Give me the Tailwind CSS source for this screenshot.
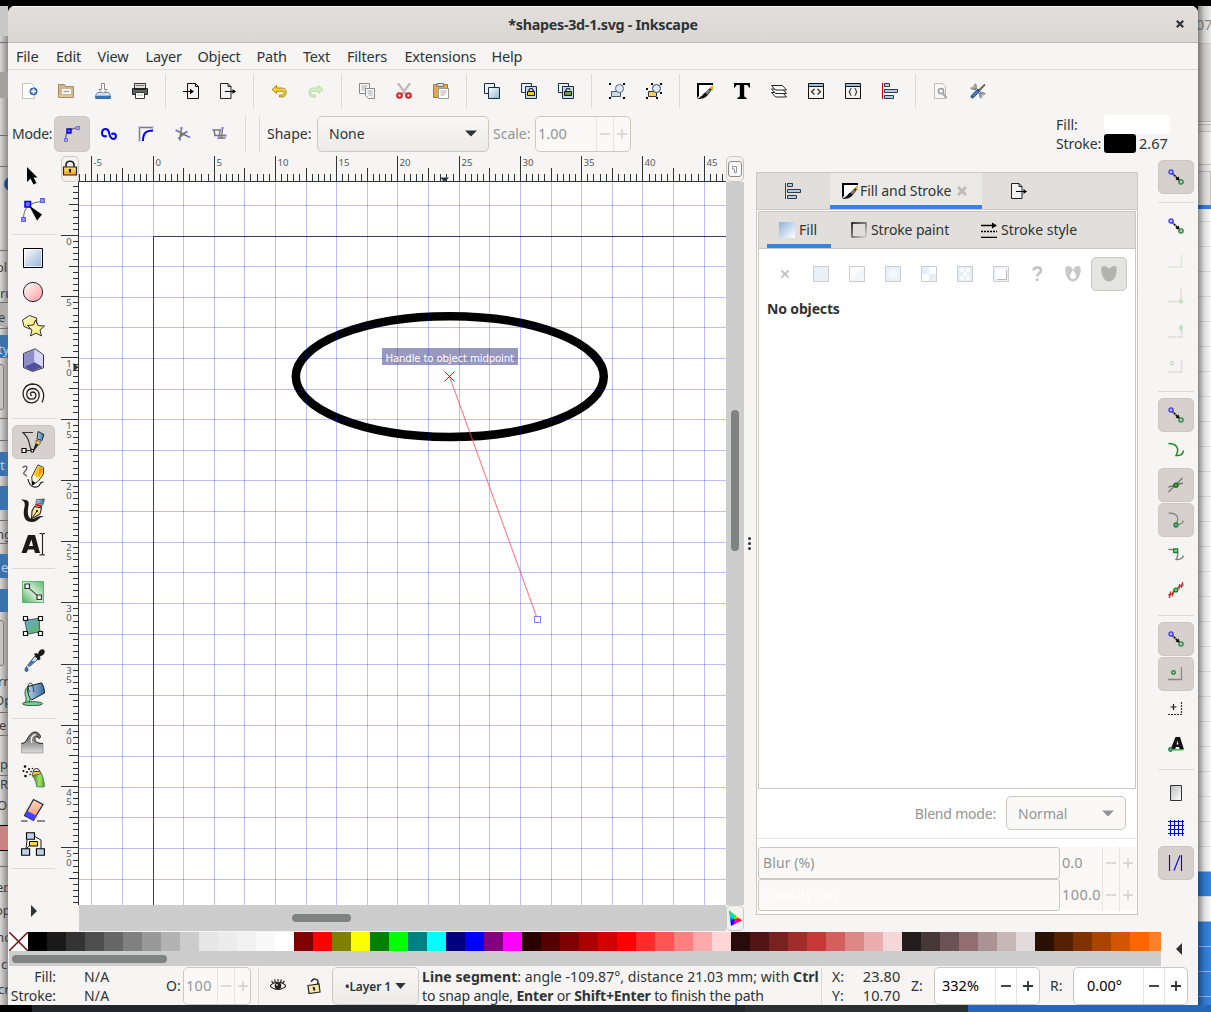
<!DOCTYPE html>
<html lang="en">
<head>
<meta charset="utf-8">
<title>*shapes-3d-1.svg - Inkscape</title>
<script src="https://cdn.jsdelivr.net/npm/@tailwindcss/browser@4"></script>
</head>
<body class="w-[1211px] h-[1012px] overflow-hidden bg-black font-['Noto_Sans',sans-serif] text-[14px] leading-[19px] text-[#2e3436]">

<svg width="0" height="0" class="absolute">
<defs>
<linearGradient id="gBlue" x1="0" y1="0" x2="1" y2="1"><stop offset="0" stop-color="#fff"/><stop offset="1" stop-color="#8fb3d6"/></linearGradient>
<linearGradient id="gBlueR" x1="0" y1="0" x2="1" y2="1"><stop offset="0" stop-color="#8fb3d9"/><stop offset="1" stop-color="#fff"/></linearGradient>
<linearGradient id="gPink" x1="0" y1="0" x2="1" y2="1"><stop offset="0" stop-color="#fff"/><stop offset="1" stop-color="#ff9aa0"/></linearGradient>
<linearGradient id="gYel" x1="0" y1="0" x2="1" y2="1"><stop offset="0" stop-color="#fffbe0"/><stop offset="1" stop-color="#fce94f"/></linearGradient>
<linearGradient id="gOr" x1="0" y1="0" x2="0" y2="1"><stop offset="0" stop-color="#ffe680"/><stop offset="1" stop-color="#f0a010"/></linearGradient>
<linearGradient id="gGreen" x1="0" y1="1" x2="1" y2="0"><stop offset="0" stop-color="#4fae5f"/><stop offset=".5" stop-color="#d7f0da"/><stop offset="1" stop-color="#5cb86a"/></linearGradient>
<linearGradient id="gGrn2" x1="0" y1="0" x2="1" y2="1"><stop offset="0" stop-color="#6aa5d8"/><stop offset="1" stop-color="#5fba5a"/></linearGradient>
<linearGradient id="gGray" x1="0" y1="0" x2="0" y2="1"><stop offset="0" stop-color="#666"/><stop offset=".4" stop-color="#888"/><stop offset="1" stop-color="#ddd"/></linearGradient>
<linearGradient id="gPage" x1="0" y1="0" x2="1" y2="1"><stop offset="0" stop-color="#bbb"/><stop offset="1" stop-color="#fff"/></linearGradient>
<linearGradient id="gFrame" x1="0" y1="0" x2="1" y2="1"><stop offset="0" stop-color="#000"/><stop offset="1" stop-color="#ccc"/></linearGradient>
<linearGradient id="gPaint" x1="0" y1="0" x2="1" y2="0"><stop offset="0" stop-color="#b4d2e8"/><stop offset="1" stop-color="#356a9c"/></linearGradient>
<linearGradient id="gEr" x1="0" y1="0" x2="0" y2="1"><stop offset="0" stop-color="#fbd9c8"/><stop offset="1" stop-color="#ee8c60"/></linearGradient>
<linearGradient id="gSpray" x1="0" y1="0" x2="1" y2="0"><stop offset="0" stop-color="#3f8f12"/><stop offset=".6" stop-color="#a8e070"/><stop offset="1" stop-color="#4fa018"/></linearGradient>
</defs>

<symbol id="new" viewBox="0 0 16 16"><path d="M.5.5h9l3 3v12H.5z" fill="#fff" stroke="#c2c2c2"/><circle cx="11.500" cy="8.300" r="3.900" fill="#3465a4"/><path d="M11.500 5.800v5M9 8.300h5" stroke="#fff" stroke-width="1.700"/></symbol>
<symbol id="open" viewBox="0 0 16 16"><path d="M.5 14.500V1.500h6l1 2h8v11z" fill="#d0b690" stroke="#a98b60"/><path d="M4.500 6.500h8v4h-8z" fill="#f4f1ea" stroke="#fff"/><path d="M5.500 8.500h6" stroke="#999"/><path d="M1 12h14v2H1z" fill="#dcc49f"/></symbol>
<symbol id="save" viewBox="0 0 16 16"><path d="M2.500 9.500h11l2 3v3H.5v-3z" fill="#d7e3f0" stroke="#6d8fb5"/><path d="M1 13h14v2.500H1z" fill="#3b7bc2" stroke="#204a87" stroke-width=".5"/><path d="M6.500.5h3v6h2.500L8 10.500 4 6.500h2.500z" fill="#fff" stroke="#8a8a8a"/></symbol>
<symbol id="print" viewBox="0 0 16 16"><path d="M2.500.5h11v5h-11z" fill="#ddd" stroke="#333"/><path d="M4 2.500h8" stroke="#777"/><path d="M.5 5.500h15v6H.5z" fill="#666" stroke="#222"/><path d="M2 5h12v2H2z" fill="#222"/><path d="M3.500 9.500h9v6h-9z" fill="#fff" stroke="#333"/><path d="M5 11h6v2H5z" fill="#c8e8c8"/></symbol>
<symbol id="import" viewBox="0 0 16 16"><path d="M4.500.5h8l3 3v12h-11z" fill="#f2f2f2" stroke="#111"/><path d="M12.500.5v3h3" fill="none" stroke="#111"/><path d="M0 8.500h8" stroke="#000" stroke-width="1.200"/><path d="M7 5.800l4 2.700-4 2.700z"/></symbol>
<symbol id="export" viewBox="0 0 16 16"><path d="M.5.5h7.500l3 3v12H.5z" fill="#f2f2f2" stroke="#222"/><path d="M8 .5v3h3" fill="none" stroke="#222"/><path d="M5 8.500h8" stroke="#000" stroke-width="1.200"/><path d="M12.500 6l3.500 2.500-3.500 2.500z"/></symbol>
<symbol id="undo" viewBox="0 0 16 16"><path d="M5.500 2.500L1 6.500l4.500 4V8.300h5.500c2.500 0 2.500 3.700 0 3.700H8.500v2H11c5.500 0 5.500-9 0-9H5.500z" fill="#f0d040" stroke="#b58900"/></symbol>
<symbol id="redo" viewBox="0 0 16 16"><path d="M10.500 2.500L15 6.500l-4.500 4V8.300H5c-2.500 0-2.500 3.700 0 3.700h2.500v2H5c-5.500 0-5.500-9 0-9h5.500z" fill="#d6ecc8" stroke="#b7dba4"/></symbol>
<symbol id="copy" viewBox="0 0 16 16"><path d="M.5.5h10v10H.5z" fill="#f8f8f8" stroke="#888"/><path d="M2.500 3h6M2.500 5h5M2.500 7h3" stroke="#aaa"/><path d="M6.500 5.500h9v10h-6l-3-3z" fill="#f8f8f8" stroke="#888"/><path d="M8.500 8h5M8.500 10h5M9.500 12h4" stroke="#aaa"/></symbol>
<symbol id="cut" viewBox="0 0 16 16"><path d="M2 .5l8.500 11M14 .5L5.500 11.500" stroke="#999" stroke-width="2"/><path d="M2.300 1l7.500 9.500M13.700 1L6 10.500" stroke="#eee" stroke-width=".7"/><circle cx="3.500" cy="12.500" r="2.300" fill="none" stroke="#d81e1e" stroke-width="2"/><circle cx="12.500" cy="12.500" r="2.300" fill="none" stroke="#d81e1e" stroke-width="2"/></symbol>
<symbol id="paste" viewBox="0 0 16 16"><path d="M.5 1.500h14v13H.5z" fill="#e2a850" stroke="#a8752a"/><path d="M4 .5h6.500v3H4z" fill="#ddd" stroke="#777"/><path d="M5.500 5.500h10v10h-10z" fill="#fff" stroke="#999"/><path d="M7.500 8h6M7.500 10h6M7.500 12h4" stroke="#aaa"/></symbol>
<symbol id="dup" viewBox="0 0 16 16"><path d="M.5.5h10v10H.5z" fill="#e8f0f8" stroke="#1c2c40"/><path d="M4.500 4.500h11v11h-11z" fill="url(#gBlue)" stroke="#1c2c40"/></symbol>
<symbol id="clone" viewBox="0 0 16 16"><path d="M.5.5h10v9H.5z" fill="#e8f0f8" stroke="#1c2c40"/><path d="M4.500 3.500h11v12h-11z" fill="#c7d9ec" stroke="#1c2c40"/><path d="M8 8.500V7c0-2 4-2 4 0v1.500" fill="none" stroke="#111" stroke-width="1.200"/><path d="M6.500 8.500h7v4h-7z" fill="#f5c432" stroke="#111"/></symbol>
<symbol id="unclone" viewBox="0 0 16 16"><path d="M.5.5h10v9H.5z" fill="#e8f0f8" stroke="#1c2c40"/><path d="M4.500 3.500h11v12h-11z" fill="#c7d9ec" stroke="#1c2c40"/><path d="M8 8.500V7c0-2 4-2 4 0" fill="none" stroke="#111" stroke-width="1.200"/><path d="M6.500 8.500h7v4h-7z" fill="#6a9f3a" stroke="#111"/></symbol>
<symbol id="group" viewBox="0 0 16 16"><path d="M0 0h2v2H0zM14 0h2v2h-2zM0 14h2v2H0zM14 14h2v2h-2z"/><path d="M2.500 8.500h9v5h-9z" fill="#c9d9ec" stroke="#456"/><circle cx="10.500" cy="5.500" r="4" fill="#dde8f4" stroke="#567"/></symbol>
<symbol id="ungroup" viewBox="0 0 16 16"><path d="M5 0h2v2H5zM14 0h2v2h-2zM0 5h2v2H0zM0 14h2v2H0zM14 9h2v2h-2zM10 14h2v2h-2z"/><path d="M2.500 8.500h8v5h-8z" fill="#f5cf50" stroke="#333"/><circle cx="10.500" cy="5.500" r="4" fill="#dde8f4" stroke="#345"/></symbol>
<symbol id="fs" viewBox="0 0 16 16"><path d="M.5.5h15L14 5l-5 5-8.500 5z" fill="#fff"/><path d="M0 0h16v2H2V13l-2 2z"/><path d="M15 3v3.500l-4 5.500-3.500 1 1-3.500z" fill="#333"/><path d="M16 2v6l-3-3z" fill="#f5b51a"/><path d="M9 9.500c-3 0-2 3-9 6.500 5 0 9-1 10.500-4z" fill="#111"/><path d="M11.500 6l2 2-3 3.500-2-1.500z" fill="#777"/></symbol>
<symbol id="text" viewBox="0 0 16 16"><path d="M0 0h16v4.500h-1.200C14.400 2.500 13.500 2 12 2h-1.800v10.500c0 1.500.8 2 2.300 2V16h-9v-1.500c1.500 0 2.300-.5 2.300-2V2H4C2.500 2 1.600 2.500 1.200 4.500H0z"/></symbol>
<symbol id="layers" viewBox="0 0 16 16"><g fill="#fff" stroke="#222"><path d="M.5 9.500h11l4 4.500h-11z"/><path d="M.5 6h11l4 4.500h-11z"/><path d="M.5 2.500h11l4 4.500h-11z"/></g></symbol>
<symbol id="xml" viewBox="0 0 16 16"><path d="M.5.5h15v15H.5z" fill="#f4f4f2" stroke="#111" stroke-width="1"/><path d="M1 1h14v2H1z" fill="#9fc0e2"/><path d="M1 3.500h14" stroke="#111"/><path d="M6.500 6L3.500 8.800l3 2.800M9.500 6l3 2.800-3 2.800" fill="none" stroke="#222" stroke-width="1.200"/></symbol>
<symbol id="css" viewBox="0 0 16 16"><path d="M.5.5h15v15H.5z" fill="#f4f4f2" stroke="#111" stroke-width="1"/><path d="M1 1h14v2H1z" fill="#9fc0e2"/><path d="M1 3.500h14" stroke="#111"/><path d="M6.500 5.500c-2.500 0-.5 3.300-2.700 3.300 2.200 0 .2 3.700 2.700 3.700M9.500 5.500c2.500 0 .5 3.300 2.700 3.300-2.200 0-.2 3.700-2.700 3.700" fill="none" stroke="#333" stroke-width="1.200"/></symbol>
<symbol id="align" viewBox="0 0 16 16"><path d="M.5 0v16" stroke="#d00000"/><g fill="#b5cbe2" stroke="#2b3a4a"><path d="M2.500.5h5v3h-5zM2.500 6.500h13v3h-13zM2.500 12.500h9v3h-9z"/></g></symbol>
<symbol id="docprops" viewBox="0 0 16 16"><path d="M1.500.5h8l3 3v12h-11z" fill="#f8f8f8" stroke="#bbb"/><circle cx="8" cy="8" r="2.600" fill="none" stroke="#999" stroke-width="1.500"/><path d="M9.500 10l4 5" stroke="#aaa" stroke-width="2.500"/></symbol>
<symbol id="prefs" viewBox="0 0 16 16"><path d="M3 3l10 10" stroke="#888" stroke-width="2.600"/><path d="M3 3l10 10" stroke="#ddd" stroke-width="1"/><path d="M1 4.500A2.700 2.700 0 1 0 4.500 1M15 11.500A2.700 2.700 0 1 0 11.500 15" fill="none" stroke="#888" stroke-width="1.500"/><path d="M15 1.500L8 8.500" stroke="#666" stroke-width="2"/><path d="M8 8L2.500 13.500" stroke="#204a87" stroke-width="3.600" stroke-linecap="round"/><path d="M8 8L2.500 13.500" stroke="#5b8fd0" stroke-width="1.500"/></symbol>

<symbol id="m1" viewBox="0 0 16 16"><path d="M1.500 14C1.500 6 5 2.500 14 2" fill="none" stroke="#777" stroke-width="1.500"/><g fill="#b0aef0" stroke="#6a68e8"><path d="M.5 12.500h3v3h-3zM12.500.5h3v3h-3z"/></g><path d="M3 3h4v4H3z" fill="#5a5af0" stroke="#0000e0" stroke-width="1.400"/></symbol>
<symbol id="m2" viewBox="0 0 16 16"><path d="M5.500 9.500c-1.500 1.800-4.500.5-4.500-2C1 2 7 1.500 8 6.500c.5 3 1 6.500 4.500 6.500 3 0 3.500-5.500 0-5.500-1 0-1.500.3-2 1" fill="none" stroke="#00f" stroke-width="2"/></symbol>
<symbol id="m3" viewBox="0 0 16 16"><path d="M15 1.500H1.500V15" fill="none" stroke="#777" stroke-width="1.400"/><path d="M5 15c0-8 3-10.500 10-10.500" fill="none" stroke="#00f" stroke-width="2"/><path d="M.5.5h2v2h-2zM13.500.5h2v2h-2zM.5 13.500h2v2h-2z" fill="#9c9af0"/></symbol>
<symbol id="m4" viewBox="0 0 16 16"><path d="M6.500 1.500L5 13.500M1.500 4.500L14 11M11.500 6L4.500 9.500M3 12.500l7-5" fill="none" stroke="#777" stroke-width="1.500"/><path d="M5.500 1h2v2h-2zM.5 3.500h2v2h-2zM13 10h2v2h-2zM4 12.500h2v2H4zM10.500 5h2v2h-2z" fill="#7d7bee"/></symbol>
<symbol id="m5" viewBox="0 0 16 16"><path d="M1.500 4h6.500l-1 8h6.500M10.500 2l-1 11M2 9.500h11.500M2 4l1 5.500" fill="none" stroke="#777" stroke-width="1.500"/><path d="M.5 3h2v2h-2zM7 3h2v2H7zM12.500 8.500h2v2h-2zM5.500 11h2v2h-2zM9.500 1h2v2h-2z" fill="#7d7bee"/></symbol>

<symbol id="t-sel" viewBox="0 0 24 24"><path d="M6 3v15l3.500-3.500 3 6 3-1.500-3-5.500h4z"/></symbol>
<symbol id="t-node" viewBox="0 0 24 24"><path d="M2.500 21C2.500 10 8 4 22 3.500" fill="none" stroke="#666"/><path d="M.7 19.700h3.600v3.600H.7zM19.700.7h3.600v3.600h-3.600z" fill="#a9a7f5" stroke="#5a58ee" stroke-width="1.200"/><path d="M4 3.500h5.500V9H4z" fill="#7472ff" stroke="#0000e8" stroke-width="1.500"/><path d="M8 7.500l13 9-5 6z"/></symbol>
<symbol id="t-rect" viewBox="0 0 24 24"><path d="M2.500 2.500h19v19h-19z" fill="url(#gBlue)" stroke="#000"/><path d="M3.500 3.500h17v17h-17z" fill="none" stroke="#fff" stroke-opacity=".7"/></symbol>
<symbol id="t-ell" viewBox="0 0 24 24"><circle cx="12" cy="12" r="9.600" fill="url(#gPink)" stroke="#222"/></symbol>
<symbol id="t-star" viewBox="0 0 24 24"><path d="M8.500 1.500L15.500 4 16 12l-7 3-6-2.500-1.500-6.500z" fill="url(#gYel)" stroke="#333"/><path d="M14.500 6l2.500 5.500 6.500.5-4.500 4 1.500 6-5.500-3-5.500 3 1.500-6L6.500 11.500l6-.5z" fill="url(#gYel)" stroke="#333"/></symbol>
<symbol id="t-box" viewBox="0 0 24 24"><path d="M2.500 5.500L14 .8l8.500 6v13L11.500 23.500l-9-4z" fill="#e0e0ff" stroke="#333"/><path d="M3 6L13.500 1.500V14L3 19z" fill="#8d8dc8"/><path d="M13.500 14l8.500 5-10.500 4L3 19z" fill="#4f4f9f"/><path d="M13.500 1.500V14l8.500 5V7z" fill="#d6d6fa"/></symbol>
<symbol id="t-spi" viewBox="0 0 24 24"><path d="M11 13.500c-1.800.3-2.500-3.500.7-3.500 5 .5 3.800 7.500-1.200 7.200C4 17 4 7 11.500 6.500c9 0 9 13.500-.5 14.300C-.5 21.500-1.500 2.500 11.500 2 20 2 25.500 11 21 20.500" fill="none" stroke="#222" stroke-width="1.300"/></symbol>
<symbol id="t-pen" viewBox="0 0 24 24"><path d="M3.500 20.500h8C6 17 12 12 2 2.500h10" fill="none" stroke="#333" stroke-width="1.200"/><path d="M1 18.500h4v4H1z" fill="#fff" stroke="#000" stroke-width="1.200"/><path d="M10 19.500h2.500V22H10z" fill="#fff" stroke="#000"/><path d="M17 1.500l6 3-2 6-5-1.500z" fill="url(#gPaint)" stroke="#234"/><path d="M15 10l5 2-2 3-3-1z" fill="#f7c63a" stroke="#333" stroke-width=".6"/><path d="M14.500 13.500l3 1.500-4.500 6-1-.5z" fill="#222"/></symbol>
<symbol id="t-pcl" viewBox="0 0 24 24"><path d="M1.500 3.500c5-3.500 6 0 1.500 5-2 2.500 3 1 2.500 4" fill="none" stroke="#555" stroke-width="1.200"/><path d="M7 15c2 11 11 9 12 5 .5-1.500 2-2 3.500-2" fill="none" stroke="#222" stroke-width="1.200"/><path d="M17 .8l5.500 2.700v6.500l-5 7-6 4-.8-8z" fill="#fff8d8" stroke="#333"/><path d="M17 1.500l5 2.500v6l-4.500 4-5-3z" fill="#ffc21a"/><path d="M18.500 3l3 2-4 8z" fill="#f58c00"/><path d="M10.800 16.500l3.500 2.300-3.300 3z"/></symbol>
<symbol id="t-cal" viewBox="0 0 24 24"><path d="M0 1.500c6 0 8.500 1 7.500 6-1 5.500-1.500 12 3 13.500 4 1 5-4.500 12.500-2.500-5 0-6 5.500-12 5.500C2 24 2 15 3.500 9 4.500 4.500 3 3 0 1.500z" fill="#1c1c1c"/><path d="M15.500 1.500l8-.5-1.500 5.500-7-1.500z" fill="url(#gPaint)" stroke="#234" stroke-width=".6"/><path d="M14.500 5.500l7 1.800-.8 2-7-2z" fill="#c81414"/><path d="M13.500 8.500l7 1.500-1.500 6-8.500 5 .5-8z" fill="#ffe89a" stroke="#222" stroke-width="1.100"/><path d="M16 13l-4.500 6.500" stroke="#222"/><circle cx="16" cy="13" r="1"/></symbol>
<symbol id="t-txt" viewBox="0 0 24 24"><path d="M7 3h7l5 18h-5l-1-3.500H7L5.500 21H.5zM10.500 7.500L8 14h4z" fill="#1a1a1a" fill-rule="evenodd"/><path d="M18.500 1.500h2l1 1 1-1h1.500M18.500 23h2l1-1 1 1h1.500M21.500 2v20" stroke="#222" fill="none" stroke-width="1.100"/></symbol>
<symbol id="t-grad" viewBox="0 0 24 24"><path d="M1.500 1.500h21v21h-21z" fill="url(#gGreen)" stroke="#5db56a"/><path d="M6 6.500l12 10.500" stroke="#555" stroke-width="1.200"/><path d="M4 4h4.500v4.500H4zM16 15h4.500v4.500H16z" fill="#e8f5e8" stroke="#333" stroke-width="1.200"/></symbol>
<symbol id="t-mesh" viewBox="0 0 24 24"><path d="M4.500 4.500c5 3 10-1 15 0-2 5-1 10 0 15-5-3-10 2-15 0 3-5-2-10 0-15z" fill="url(#gGrn2)" stroke="#456"/><path d="M2.500 2.500h4v4h-4zM17.500 2.500h4v4h-4zM2.500 17.500h4v4h-4zM17.500 17.500h4v4h-4z" fill="#fff" stroke="#111" stroke-width="1.200"/></symbol>
<symbol id="t-drop" viewBox="0 0 24 24"><path d="M14 8l3 3-8.500 7.500-2-1z" fill="#cfe0f2" stroke="#345"/><path d="M10.500 12.500l3 1-5.500 4.500-1-1z" fill="#3b73b0"/><path d="M13 6l2-1 2 1C18 0 25 0 23.500 5c-1 2.500-3.500 3-4.500 3.500l.5 2.500-2 1.500z" fill="#1a1a1a"/><path d="M5.500 18.500c3 4 1 5 0 5s-3-1 0-5z" fill="#3b73b0" stroke="#234" stroke-width=".6"/></symbol>
<symbol id="t-buck" viewBox="0 0 24 24"><path d="M7 4.500C3.500 7 3.500 12 5 15.500c.5 2-.5 3.500-.5 5h4.500c-1-2 0-4 1-4.500z" fill="#8fdca0" stroke="#243" stroke-width=".9"/><path d="M7 4.500L20.500.8c2 2.500 3 6.500 3 10.200L10.500 18C7.500 15 6 9 7 4.500z" fill="url(#gPaint)" stroke="#122"/><path d="M8.500 10c-2.500-4-1.500-9 1-9s3 6 3.500 9" fill="none" stroke="#333"/><ellipse cx="11.500" cy="21.700" rx="10" ry="2" fill="#7ad08c" stroke="#243" stroke-width=".9"/></symbol>
<symbol id="t-tweak" viewBox="0 0 24 24"><path d="M.5 13.500c7 0 6-11 14-11 5 0 6 6 2.500 6-.5-2-3.500-2-3.500 0 0 4 5 5 8.500 5v9.500H.5z" fill="url(#gGray)" stroke="#888" stroke-width=".6"/><path d="M11 13c-2-4 0-8 4-8.500" fill="none" stroke="#eee" stroke-width="1.500"/><path d="M.5 13.500c7 0 6-11.500 13.500-11.500 4 0 7 5 4.500 6.500-1-3-5-2-4.500 1 .3 3 4 4 8 4" fill="none" stroke="#222"/></symbol>
<symbol id="t-spray" viewBox="0 0 24 24"><g><circle cx="4" cy="2.500" r="1.300"/><circle cx="8" cy="5" r="1"/><circle cx="2.500" cy="7" r="1"/><circle cx="6" cy="8" r="1"/><circle cx="4.500" cy="12" r="1.300"/><circle cx="10" cy="7.500" r=".8"/><circle cx="9" cy="10.500" r=".8"/><circle cx="11.500" cy="4.500" r=".8"/></g><path d="M12.500 7.500c0-4 6-4 6 0z" fill="#ddd" stroke="#222"/><path d="M12 7.500h7.500l.5 3-9 1z" fill="#f5c432" stroke="#432" stroke-width=".7"/><path d="M11.500 12l9-2.500c2 4 2.500 8 3 13-3 .8-5 .8-8 0-.5-4-1-7-4-10.500z" fill="url(#gSpray)" stroke="#365" stroke-width=".7"/></symbol>
<symbol id="t-er" viewBox="0 0 24 24"><path d="M12.500 1.500l9.500 5L14 19.500l-1.500 3L3.500 17.500z" fill="url(#gEr)" stroke="#222" stroke-width="1.200"/><path d="M6.500 13l9.500 5-3.500 4.500-9-5z" fill="#4242ff"/><path d="M0 23h6.500M16 23h8" stroke="#222" stroke-width="1.200"/></symbol>
<symbol id="t-conn" viewBox="0 0 24 24"><path d="M13 4l7 4v9M6 8l-1 9M5 17l4-4" fill="none" stroke="#222"/><g fill="#bcd2ea" stroke="#000" stroke-width="1.100"><path d="M5.500.8h8v6.500h-8zM.6 16.800h8v6.500h-8zM15.400 16.800h8v6.500h-8z"/></g><path d="M8.500 9.500h8V14h-8z" fill="#ffd84a" stroke="#000"/></symbol>

<symbol id="s-node" viewBox="0 0 16 16"><path d="M4 4l6 6" stroke="#000" stroke-width="1.600" stroke-dasharray="2 .7"/><path d="M12 12l-4.500-1.500 3-3z"/><circle cx="3" cy="3" r="2.100" fill="#b5b3ff" stroke="#3a38f5" stroke-width="1.300"/><circle cx="13" cy="13" r="2.100" fill="#b8bfe0" stroke="#2b8a34" stroke-width="1.400"/></symbol>
<symbol id="s-b1" viewBox="0 0 16 16"><path d="M0 14H13.500V1" fill="none" stroke="#cfe8cf" stroke-width="1.600" stroke-dasharray="1.500 .7"/></symbol>
<symbol id="s-b2" viewBox="0 0 16 16"><path d="M0 13.500h13M13 1v12" fill="none" stroke="#d4d4d0" stroke-width="1.600" stroke-dasharray="1.500 .7"/><path d="M13 10.800l2.700 2.700-2.700 2.500-2.700-2.500z" fill="#bfe0c4"/></symbol>
<symbol id="s-b3" viewBox="0 0 16 16"><path d="M0 14H13.500V1" fill="none" stroke="#d4d4d0" stroke-width="1.600" stroke-dasharray="1.500 .7"/><path d="M13 1.500l2.500 3.500L13 8.500 10.500 5z" fill="#bfe0c4"/></symbol>
<symbol id="s-b4" viewBox="0 0 16 16"><path d="M0 14H13.500V1" fill="none" stroke="#d4d4d0" stroke-width="1.600" stroke-dasharray="1.500 .7"/><circle cx="4" cy="5" r="1.700" fill="none" stroke="#bfe0c4" stroke-width="1.300"/></symbol>
<symbol id="s-path" viewBox="0 0 16 16"><path d="M.5 1.500c8 0 11.500 5 7.500 12 5 .5 7-2 7.500-5" fill="none" stroke="#188a18" stroke-width="1.500"/></symbol>
<symbol id="s-int" viewBox="0 0 16 16"><path d="M.5 15L14.500 1M.5 10L15 6" fill="none" stroke="#777" stroke-width="1.300"/><circle cx="8" cy="8.200" r="2" fill="#5a5" stroke="#0a6a14" stroke-width="1.300"/></symbol>
<symbol id="s-cusp" viewBox="0 0 16 16"><path d="M.5 1C9 1 12 5.500 8 12.500c5 .5 7-2 7.500-4" fill="none" stroke="#888" stroke-width="1.300"/><circle cx="8" cy="13" r="2" fill="#88c" stroke="#188a28" stroke-width="1.300"/></symbol>
<symbol id="s-smooth" viewBox="0 0 16 16"><path d="M.5 2.500C9 2 12 6 8 12.500c5 .5 7-2 7.500-4" fill="none" stroke="#777" stroke-width="1.300"/><path d="M5.700 2h4v3.500h-4z" fill="#9ad0a0" stroke="#188a28" stroke-width="1.300"/></symbol>
<symbol id="s-mid" viewBox="0 0 16 16"><path d="M.5 15L15 1" stroke="#777"/><path d="M2.500 9.500L1.500 16M5.500 8.500L4 14.500M0 13l6-2M11.500 2l-.5 5.500M14.500 0L13.500 6M9.500 5.500l6-2.500" stroke="#d01818" stroke-width="1.100"/><circle cx="7.800" cy="8" r="1.900" fill="#8c8" stroke="#0a7a18" stroke-width="1.300"/></symbol>
<symbol id="s-ctr" viewBox="0 0 16 16"><path d="M0 13.500h13.500V1" fill="none" stroke="#888" stroke-width="1.300"/><circle cx="5.500" cy="6.500" r="1.800" fill="#9d9" stroke="#188a28" stroke-width="1.300"/></symbol>
<symbol id="s-rot" viewBox="0 0 16 16"><path d="M5.500 3v6M2.500 6h6" stroke="#222" stroke-width="1.200"/><path d="M0 13.500h13.500V1" fill="none" stroke="#333" stroke-width="1.200" stroke-dasharray="2 1"/></symbol>
<symbol id="s-txt" viewBox="0 0 16 16"><path d="M7.500 1h4.500l4 12.500h-4.300L11 11H8l-1 2.500H2.500zM9.700 4.500L8.500 8.500h2z" fill="#111" fill-rule="evenodd"/><path d="M3 13.800h12" stroke="#3fae4c" stroke-width="1.400"/><circle cx="2.500" cy="13.500" r="1.800" fill="#88c" stroke="#188a28" stroke-width="1.200"/></symbol>
<symbol id="s-page" viewBox="0 0 16 16"><path d="M2.500.5h11v15h-11z" fill="url(#gPage)" stroke="#333"/></symbol>
<symbol id="s-grid" viewBox="0 0 16 16"><path d="M2.500 0v16M6.500 0v16M10.500 0v16M14.500 0v16M0 1.500h16M0 5.500h16M0 9.500h16M0 13.500h16" stroke="#00f" stroke-width="1.100"/></symbol>
<symbol id="s-guide" viewBox="0 0 16 16"><path d="M1.500 0v16M13.500 0v16M6 15.500L12 .5" stroke="#00f" stroke-width="1.100"/></symbol>

<symbol id="p-x" viewBox="0 0 16 16"><path d="M4.500 4.500l7 7M11.500 4.500l-7 7" stroke="#c4c4c4" stroke-width="1.800"/></symbol>
<symbol id="p-flat" viewBox="0 0 16 16"><path d="M.5.5h15v15H.5z" fill="#eaf0f8" stroke="#ccc"/></symbol>
<symbol id="p-lin" viewBox="0 0 16 16"><path d="M.5.5h15v15H.5z" fill="#f1f5fa" stroke="#ccc"/><path d="M1 1h14L1 15z" fill="#fafcfd"/></symbol>
<symbol id="p-rad" viewBox="0 0 16 16"><path d="M.5.5h15v15H.5z" fill="#eaf0f8" stroke="#ccc"/><circle cx="8" cy="8" r="4.500" fill="#f6fafd"/></symbol>
<symbol id="p-mesh" viewBox="0 0 16 16"><path d="M.5.5h15v15H.5z" fill="#fff" stroke="#ccc"/><path d="M1 1h7v7H1zM8 8h7v7H8z" fill="#e6eef8"/></symbol>
<symbol id="p-pat" viewBox="0 0 16 16"><path d="M.5.5h15v15H.5z" fill="#e6eef8" stroke="#ccc"/><path d="M5 1.500l2.500 2.500L5 6.500 2.500 4zM11 1.500L13.500 4 11 6.500 8.500 4zM5 9.500L7.500 12 5 14.500 2.500 12zM11 9.500l2.500 2.500-2.500 2.500L8.500 12zM8 5.500l2.500 2.500L8 10.500 5.500 8z" fill="#fff"/></symbol>
<symbol id="p-sw" viewBox="0 0 16 16"><path d="M.5.5h15v15H.5z" fill="#edf2f8" stroke="#ccc"/><path d="M3 3h10v10H3z" fill="#fff"/><path d="M4 13.500h9.500V4" fill="none" stroke="#bbb"/></symbol>
<symbol id="p-q" viewBox="0 0 16 16"><path d="M4.500 4.500C4.500.5 12 .5 12 4.500c0 3-3.800 2.500-3.800 6" fill="none" stroke="#c2c2c2" stroke-width="2.500"/><path d="M6.800 12.500h2.700V15H6.800z" fill="#c2c2c2"/></symbol>
<symbol id="p-eo" viewBox="0 0 16 16"><path d="M3 0c2.500 0 3.500 1.500 5 1.500S10.500 0 13 0c3 0 3 3 2.500 6-.5 5-3.500 9.500-7.500 9.500S1 11 .5 6C0 3 0 0 3 0zM8 4C6 7 5 8.500 5 10c0 4 6 4 6 0 0-1.500-1-3-3-6z" fill="#c8c8c8" fill-rule="evenodd"/><path d="M5.500 0h5L8 4z" fill="#fff"/></symbol>
<symbol id="p-nz" viewBox="0 0 16 16"><path d="M3 0c2.500 0 3.500 2.500 5 2.500S10.500 0 13 0c3 0 3 3 2.500 6-.5 5-3.500 9.500-7.500 9.500S1 11 .5 6C0 3 0 0 3 0z" fill="#b3b3ae"/></symbol>
<symbol id="pt-fill" viewBox="0 0 16 16"><path d="M0 0h16v16H0z" fill="url(#gBlueR)"/></symbol>
<symbol id="pt-paint" viewBox="0 0 16 16"><path d="M1 1h14v14H1z" fill="none" stroke="url(#gFrame)" stroke-width="1.500"/></symbol>
<symbol id="pt-style" viewBox="0 0 16 16"><path d="M0 3.500h12" stroke="#000" stroke-width="1.300"/><path d="M11 .5l5 3-5 3z"/><path d="M0 9.500h16" stroke="#000" stroke-width="1.300" stroke-dasharray="2 1"/><path d="M0 15.300h16" stroke="#000" stroke-width="1.300"/></symbol>
<symbol id="lock" viewBox="0 0 16 16"><path d="M4 7.500V5c0-5 8-5 8 0v2.500" fill="none" stroke="#222" stroke-width="1.600"/><path d="M1.500 7h13v8h-13z" fill="url(#gOr)" stroke="#222" stroke-width="1.200"/><path d="M7.200 9.500h1.600v3H7.200z"/><circle cx="8" cy="10" r="1.200"/></symbol>
<symbol id="unlock" viewBox="0 0 16 16"><path d="M5.500 4C6-.5 12.500.5 12 5l-.8 3" fill="none" stroke="#222" stroke-width="1.500"/><path d="M2 7.500l11-1.500 1 8-11 1.500z" fill="#fbe9a0" stroke="#222" stroke-width="1.200"/><path d="M7.500 9l1 3.500" stroke="#111" stroke-width="1.800"/></symbol>
<symbol id="eye" viewBox="0 0 16 16"><path d="M0 9c4-5 12-5 16 0-4 4.500-12 4.500-16 0z" fill="#fff" stroke="#222" stroke-width="1.200"/><circle cx="8" cy="8.800" r="3.400" fill="#222"/><circle cx="7" cy="7.800" r=".9" fill="#fff"/><path d="M1.500 4l2 2M4.500 2.500l1 2.500M8 2v2.500M11.500 2.500l-1 2.500M14.500 4l-2 2" stroke="#222" stroke-width="1.200"/></symbol>
</svg>

<div class="h-[6px] bg-black"></div>
<div class="flex h-[999px]">

  <!-- sliver of the window behind, left -->
  <div id="leftStrip" class="relative w-[8px] shrink-0 overflow-hidden bg-gradient-to-r from-[#d8d7d5] to-[#8f8e8c] text-[13px] leading-[16px]"></div>

  <!-- main window -->
  <div class="flex w-[1190px] shrink-0 flex-col overflow-hidden rounded-t-[7px] bg-[#f6f5f4]">
    <div class="relative flex h-[37px] shrink-0 items-center justify-center border-b border-[#bfb8b1] bg-gradient-to-b from-[#e3dfdc] to-[#dad6d2] shadow-[inset_0_1px_#f9f8f7]">
      <span class="text-[14.3px] font-bold tracking-[-0.28px]">*shapes-3d-1.svg - Inkscape</span>
      <svg class="absolute right-[14px] top-[14px] h-[8px] w-[8px]" viewBox="0 0 8 8"><path d="M.8.8l6.400 6.400M7.200.8L.8 7.200" stroke="#2e3436" stroke-width="2.200"/></svg>
    </div>

    <div id="menu" class="flex h-[27px] shrink-0 items-center border-b border-[#dcdad8] pl-[8px] text-[14.500px]"></div>

    <div id="toolbar" class="flex h-[42px] shrink-0 items-center pl-[4px]"></div>

    <!-- tool options -->
    <div class="flex h-[43px] shrink-0 pl-[4px]">
      <span class="w-[42px] shrink-0 pt-[12px] tracking-[-0.2px]">Mode:</span>
      <div id="modes" class="flex w-[191px] shrink-0 pt-[4px]"></div>
      <div class="mt-[4px] mr-[13px] h-[36px] w-px shrink-0 bg-[#dcdad8]"></div>
      <div class="mt-[4px] h-[36px] w-px shrink-0 bg-[#dcdad8]"></div>
      <span class="ml-[7px] w-[50px] shrink-0 pt-[12px]">Shape:</span>
      <div class="mt-[4px] flex h-[36px] w-[172px] shrink-0 items-center justify-between rounded-[5px] border border-[#cdc7c2] bg-gradient-to-b from-[#f8f7f6] to-[#edebe9] pr-[11px] pb-px pl-[11px]"><span>None</span><svg class="h-[7px] w-[12px]" viewBox="0 0 12 7"><path d="M0 .5h12L6 6.500z" fill="#2e3436"/></svg></div>
      <span class="ml-[4px] w-[42px] shrink-0 pt-[12px] text-[#929595]">Scale:</span>
      <div class="mt-[4px] flex h-[36px] w-[96px] shrink-0 items-center overflow-hidden rounded-[5px] border border-[#cdc7c2] bg-[#faf9f8] text-[#929595]">
        <span class="w-[60px] pb-px pl-[2px] text-[14.5px]">1.00</span>
        <span class="flex h-full w-[17px] items-center justify-center border-l border-[#e6e4e1]"><svg class="h-[10px] w-[10px]" viewBox="0 0 10 10"><path d="M0 5h10" stroke="#d2d1cf" stroke-width="1.500"/></svg></span>
        <span class="flex h-full w-[17px] items-center justify-center border-l border-[#e6e4e1]"><svg class="h-[10px] w-[10px]" viewBox="0 0 10 10"><path d="M0 5h10M5 0v10" stroke="#d2d1cf" stroke-width="1.500"/></svg></span>
      </div>
      <div class="ml-[425px] grid w-[130px] shrink-0 grid-cols-[48px_1fr] content-start pt-[3px]">
        <span>Fill:</span><span class="h-[19px] w-[66px] rounded-[3px] bg-white"></span>
        <span class="tracking-[-0.1px]">Stroke:</span><span class="flex"><span class="h-[19px] w-[32px] rounded-[3px] bg-black"></span><span class="pl-[3px] text-[14.5px]">2.67</span></span>
      </div>
    </div>

    <div class="flex h-[776px] shrink-0">
      <div id="tools" class="flex w-[53px] shrink-0 flex-col items-start pt-[4px] pl-[4px]"></div>

      <!-- canvas with rulers and scrollbars -->
      <div class="relative flex w-[665px] shrink-0 flex-col">
        <svg id="canvas" class="h-[750px] w-[665px]" viewBox="61 155 665 750"></svg>
        <div class="absolute top-[1px] left-0 flex h-[26px] w-[18px] items-center justify-center rounded-[5px] border border-[#cdc7c2] bg-[#f4f2f1] pb-[2px]"><svg class="h-[16px] w-[16px]"><use href="#lock"/></svg></div>
        <div class="ml-[18px] h-[26px] bg-[#cdcdcd] pt-[9px]"><div class="ml-[213px] h-[8px] w-[59px] rounded-full bg-[#7f8382]"></div></div>
      </div>
      <div class="flex w-[18px] shrink-0 flex-col">
        <div class="mt-[1px] flex h-[26px] items-center justify-center rounded-[5px] border border-[#cdc7c2] bg-[#f4f2f1]"><svg class="h-[16px] w-[14px]" viewBox="0 0 14 16"><rect x=".5" y=".5" width="13" height="15" rx="2.500" fill="#f8f8f8" stroke="#8b8b8b"/><path d="M4.500 5.500h4v6h-2V8h-2z" fill="#fff" stroke="#888" stroke-width=".9"/></svg></div>
        <div class="h-[723px] bg-[#cdcdcd] pt-[228px] pl-[5px]"><div class="h-[141px] w-[8px] rounded-full bg-[#7f8382]"></div></div>
        <div class="flex h-[26px] items-center justify-center rounded-[5px] border border-[#cdc7c2] bg-[#f4f2f1]">
          <div class="h-[16px] w-[14px] bg-[conic-gradient(from_90deg_at_45%_55%,#f00,#f0f,#00f_35%,#0cf,#0f0_80%,#ff0_92%,#f00)] [clip-path:polygon(5%_0,100%_65%,22%_100%)]"></div>
        </div>
      </div>

      <div class="flex w-[12px] shrink-0 flex-col items-start gap-[2px] pt-[382px] pl-[4px]"><i class="h-[3px] w-[3px] rounded-full bg-[#2e3436]"></i><i class="h-[3px] w-[3px] rounded-full bg-[#2e3436]"></i><i class="h-[3px] w-[3px] rounded-full bg-[#2e3436]"></i></div>

      <!-- docked dialogs -->
      <div class="mt-[17px] flex h-[743px] w-[382px] shrink-0 flex-col border border-[#cdc7c2] bg-white">
        <div class="flex h-[37px] shrink-0 border-b border-[#cdc7c2] bg-[#e1dedb]">
          <div class="flex w-[73px] items-center justify-center"><svg class="mr-px h-[16px] w-[16px]"><use href="#align"/></svg></div>
          <div class="flex w-[152px] items-center border-b-[4px] border-[#3584e4] bg-[#ebe9e6] pl-[12px] pt-[3px]"><svg class="h-[16px] w-[16px]"><use href="#fs"/></svg><span class="w-[99px] pl-[2px] tracking-[-0.08px] whitespace-nowrap">Fill and Stroke</span><svg class="h-[10px] w-[10px]" viewBox="0 0 10 10"><path d="M1 1l8 8M9 1L1 9" stroke="#bdbcba" stroke-width="3"/></svg></div>
          <div class="flex w-[73px] items-center justify-center"><svg class="h-[16px] w-[16px]"><use href="#export"/></svg></div>
        </div>
        <div class="ml-[1px] mt-[1px] flex h-[578px] w-[378px] shrink-0 flex-col border border-[#cdc7c2]">
          <div class="flex h-[37px] shrink-0 border-b border-[#cdc7c2] bg-[#e1dedb] pl-[8px]">
            <div class="flex w-[64px] items-center border-b-[4px] border-[#3584e4] pl-[12px] pt-[3px]"><svg class="h-[16px] w-[16px]"><use href="#pt-fill"/></svg><span class="pl-[4px]">Fill</span></div>
            <div class="flex w-[130px] items-center pb-px pl-[20px]"><svg class="h-[16px] w-[16px]"><use href="#pt-paint"/></svg><span class="pl-[4px] tracking-[-0.12px] whitespace-nowrap">Stroke paint</span></div>
            <div class="flex items-center pb-px pl-[20px]"><svg class="h-[16px] w-[16px]"><use href="#pt-style"/></svg><span class="pl-[4px] whitespace-nowrap">Stroke style</span></div>
          </div>
          <div id="paints" class="flex pl-[8px] pt-[8px]"></div>
          <div class="pl-[8px] pt-[8px] font-bold tracking-[-0.15px]">No objects</div>
        </div>
        <div class="flex h-[50px] shrink-0 items-center justify-end border-b border-[#e4e2df] pr-[11px] pb-px text-[#929595]"><span class="mr-[10px] tracking-[-0.2px]">Blend mode:</span>
          <div class="flex h-[34px] w-[120px] items-center justify-between rounded-[5px] border border-[#cdc7c2] bg-[#faf9f8] px-[11px]"><span>Normal</span><svg class="h-[7px] w-[12px]" viewBox="0 0 12 7"><path d="M0 .5h12L6 6.500z" fill="#929595"/></svg></div></div>
        <div class="ml-[1px] mt-[8px] flex w-[378px] flex-col text-[#929595]">
          <div class="flex h-[32px] bg-[#faf9f8]"><div class="flex w-[302px] items-center rounded-[3px] border border-[#cdc7c2] pb-[2px] pl-[4px] tracking-[0.1px]">Blur (%)</div><span class="w-[42px] self-center pb-px pl-[2px] text-[14.5px]">0.0</span><span class="flex w-[17px] items-center justify-center border-l border-[#e6e4e1]"><svg class="h-[10px] w-[10px]" viewBox="0 0 10 10"><path d="M0 5h10" stroke="#d2d1cf" stroke-width="1.500"/></svg></span><span class="flex w-[17px] items-center justify-center border-l border-[#e6e4e1]"><svg class="h-[10px] w-[10px]" viewBox="0 0 10 10"><path d="M0 5h10M5 0v10" stroke="#d2d1cf" stroke-width="1.500"/></svg></span></div>
          <div class="flex h-[32px] bg-[#faf9f8]"><div class="flex w-[302px] items-center rounded-[3px] border border-[#cdc7c2] pb-[2px] pl-[4px] text-white">Opacity (%)</div><span class="w-[42px] self-center pb-px pl-[2px] text-[14.5px] tracking-[0.4px]">100.0</span><span class="flex w-[17px] items-center justify-center border-l border-[#e6e4e1]"><svg class="h-[10px] w-[10px]" viewBox="0 0 10 10"><path d="M0 5h10" stroke="#d2d1cf" stroke-width="1.500"/></svg></span><span class="flex w-[17px] items-center justify-center border-l border-[#e6e4e1]"><svg class="h-[10px] w-[10px]" viewBox="0 0 10 10"><path d="M0 5h10M5 0v10" stroke="#d2d1cf" stroke-width="1.500"/></svg></span></div>
        </div>
      </div>

      <div id="snap" class="ml-[20px] flex w-[36px] shrink-0 flex-col pt-[5px]"></div>
    </div>

    <!-- palette -->
    <div class="flex h-[35px] shrink-0">
      <div class="ml-px w-[1152px] shrink-0 overflow-hidden">
        <div id="palette" class="mt-px flex h-[19px]"></div>
        <div class="h-[15px] bg-[#cdcdcd] pt-[4px] pl-[3px]"><div class="h-[8px] w-[155px] rounded-full bg-[#7f8382]"></div></div>
      </div>
      <svg class="mt-[12px] ml-[15px] h-[12px] w-[6px]" viewBox="0 0 6 12"><path d="M6 0v12L0 6z" fill="#2e3436"/></svg>
    </div>

    <!-- status bar -->
    <div class="flex h-[39px] shrink-0 pt-[1px]">
      <div class="grid w-[48px] shrink-0 content-start text-right"><span>Fill:</span><span class="tracking-[-0.1px]">Stroke:</span></div>
      <div class="ml-[28px] grid w-[82px] shrink-0 content-start tracking-[0.2px]"><span>N/A</span><span>N/A</span></div>
      <span class="w-[17px] pt-[9px]">O:</span>
      <div class="flex h-[38px] w-[68px] shrink-0 items-center rounded-[5px] border border-[#cdc7c2] bg-[#faf9f8] text-[14.5px] text-[#929595]"><span class="w-[33px] shrink-0 pb-[2px] pl-[2px] tracking-[0.3px]">100</span>
        <span class="flex h-full w-[17px] shrink-0 items-center justify-center border-l border-[#e6e4e1]"><svg class="h-[10px] w-[10px]" viewBox="0 0 10 10"><path d="M0 5h10" stroke="#d2d1cf" stroke-width="1.500"/></svg></span>
        <span class="flex h-full w-[16px] shrink-0 items-center justify-center border-l border-[#e6e4e1]"><svg class="h-[10px] w-[10px]" viewBox="0 0 10 10"><path d="M0 5h10M5 0v10" stroke="#d2d1cf" stroke-width="1.500"/></svg></span></div>
      <div class="ml-[7px] w-px shrink-0 bg-[#dcdad8]"></div>
      <svg class="mt-[10px] ml-[11px] h-[16px] w-[16px] shrink-0"><use href="#eye"/></svg>
      <svg class="mt-[11px] ml-[20px] h-[16px] w-[16px] shrink-0"><use href="#unlock"/></svg>
      <div class="ml-[10px] flex h-[38px] w-[87px] shrink-0 items-center justify-between rounded-[5px] border border-[#cdc7c2] bg-gradient-to-b from-[#f8f7f6] to-[#edebe9] pr-[12px] pl-[12px] text-[12px] font-semibold tracking-[-0.1px]"><span>•Layer 1</span><svg class="h-[6px] w-[11px]" viewBox="0 0 12 7"><path d="M0 0h12L6 7z" fill="#2e3436"/></svg></div>
      <div class="ml-[3px] w-[399px] shrink-0 whitespace-nowrap"><div class="tracking-[0.065px]"><b>Line segment</b>: angle -109.87°, distance 21.03 mm; with <b>Ctrl</b></div><div class="tracking-[-0.15px]">to snap angle, <b>Enter</b> or <b>Shift+Enter</b> to finish the path</div></div>
      <div class="w-px shrink-0 bg-[#dcdad8]"></div>
      <div class="ml-[10px] grid w-[20px] shrink-0 content-start"><span>X:</span><span>Y:</span></div>
      <div class="grid w-[48.5px] shrink-0 content-start text-right text-[14.5px] tracking-[0.15px]"><span>23.80</span><span>10.70</span></div>
      <span class="ml-[10.500px] w-[23px] shrink-0 pt-[9px]">Z:</span>
      <div class="flex h-[38px] w-[106px] shrink-0 items-center rounded-[5px] border border-[#cdc7c2] bg-white text-[14.5px] text-black"><span class="w-[60px] shrink-0 pb-[2px] pl-[7px]">332%</span>
        <span class="flex h-full w-[21px] shrink-0 items-center justify-center border-l border-[#e6e4e1]"><svg class="h-[10px] w-[10px]" viewBox="0 0 10 10"><path d="M0 5h10" stroke="#2e3436" stroke-width="1.800"/></svg></span>
        <span class="flex h-full w-[22px] shrink-0 items-center justify-center border-l border-[#e6e4e1]"><svg class="h-[10px] w-[10px]" viewBox="0 0 10 10"><path d="M0 5h10M5 0v10" stroke="#2e3436" stroke-width="1.800"/></svg></span></div>
      <span class="ml-[10px] w-[23px] shrink-0 pt-[9px]">R:</span>
      <div class="flex h-[38px] w-[115px] shrink-0 items-center rounded-[5px] border border-[#cdc7c2] bg-white text-[14.5px] text-black"><span class="w-[69px] shrink-0 pb-[2px] pl-[13px]">0.00°</span>
        <span class="flex h-full w-[21px] shrink-0 items-center justify-center border-l border-[#e6e4e1]"><svg class="h-[10px] w-[10px]" viewBox="0 0 10 10"><path d="M0 5h10" stroke="#2e3436" stroke-width="1.800"/></svg></span>
        <span class="flex h-full w-[22px] shrink-0 items-center justify-center border-l border-[#e6e4e1]"><svg class="h-[10px] w-[10px]" viewBox="0 0 10 10"><path d="M0 5h10M5 0v10" stroke="#2e3436" stroke-width="1.800"/></svg></span></div>
    </div>
  </div>

  <!-- sliver of the window behind, right -->
  <div class="relative w-[13px] shrink-0 overflow-hidden bg-[#fbfbfb]">
    <div class="flex h-[37px] items-center bg-[#ececeb] text-[14.5px] text-[#8f9191]"><span class="ml-[-2px]">07</span></div>
    <div class="h-[78px] border-t border-[#ccc] bg-[#dedddb]"></div>
    <div class="h-[4px] border-t border-b border-[#bbb] bg-[#f3f2f1]"></div>
    <div class="h-[6px] bg-[#e8e7e5]"></div>
    <div class="h-[34px] border-t border-b border-[#c8c4c0] bg-[#f3f2f1]"></div>
    <div class="h-[6px] bg-[#eee]"></div>
    <div class="h-[34px] border-t border-r border-[#c8c4c0] bg-[#eceae8]"></div>
    <div class="h-[4px] bg-[#3584e4]"></div>
    <div id="rightRows" class="flex flex-col pt-[12px]"></div>
    <div class="absolute inset-y-0 left-0 w-[13px] bg-gradient-to-r from-black/45 via-black/12 to-transparent"></div>
  </div>
</div>
<div class="flex h-[7px] bg-[#272b2d]"><div class="w-[32px] bg-black"></div><div class="w-[713px] bg-[#20262a]"></div><div class="w-[223px] bg-[#2b3131]"></div><div class="flex-1 bg-[#2467b8]"></div></div>

<script>
const $ = id => document.getElementById(id);
const icon16 = n => `<svg class="h-[16px] w-[16px]"><use href="#${n}"/></svg>`;

$('menu').innerHTML = [['File',40],['Edit',41.5],['View',48],['Layer',52],['Object',59],['Path',46.5],['Text',44],['Filters',57.5],['Extensions',87],['Help',40]]
  .map(([t,w]) => `<span class="shrink-0 tracking-[-0.2px]" style="width:${w}px">${t}</span>`).join('');

$('toolbar').innerHTML = ['new','open','save','print','|','import','export','|','undo','redo','|','copy','cut','paste','|','dup','clone','unclone','|','group','ungroup','|','fs','text','layers','xml','css','align','|','docprops','prefs']
  .map((n,i) => n === '|' ? '<div class="mr-[7px] ml-[6px] h-[34px] w-px shrink-0 bg-[#dcdad8]"></div>'
    : `<div class="${i === 0 ? 'flex w-[36px] shrink-0 justify-center pr-px' : 'flex w-[37px] shrink-0 justify-center pr-px'}">${icon16(n)}</div>`).join('');

$('modes').innerHTML = ['m1','m2','m3','m4','m5']
  .map((n,i) => `<div class="${i ? 'flex h-[36px] w-[37px] items-center justify-center pr-px' : 'flex h-[36px] w-[36px] mr-px items-center justify-center rounded-[5px] border border-[#cdc7c2] bg-[#d6d1cd]'}">${icon16(n)}</div>`).join('');

$('tools').innerHTML = ['t-sel','t-node','|','t-rect','t-ell','t-star','t-box','t-spi','|','t-pen','t-pcl','t-cal','t-txt','|','t-grad','t-mesh','t-drop','t-buck','|','t-tweak','t-spray','t-er','t-conn','|']
  .map(n => n === '|' ? '<div class="my-[6.5px] h-px w-[43px] shrink-0 bg-[#dcdad8]"></div>'
    : `<div class="${n === 't-pen' ? 'flex h-[34px] w-[43px] shrink-0 items-center justify-center rounded-[5px] border border-[#cdc7c2] bg-[#d6d1cd] pr-px' : 'flex h-[34px] w-[43px] shrink-0 items-center justify-center pr-px'}"><svg class="h-[24px] w-[24px]"><use href="#${n}"/></svg></div>`).join('')
  + '<svg class="mt-[30px] ml-[19px] h-[12px] w-[6px] shrink-0" viewBox="0 0 6 12"><path d="M0 0v12l6-6z" fill="#2e3436"/></svg>';

let k = 0;
$('snap').innerHTML = ['s-node','|','s-node','s-b1','s-b2','s-b3','s-b4','|','s-node','s-path','s-int','s-cusp','s-smooth','s-mid','|','s-node','s-ctr','s-rot','s-txt','|','s-page','s-grid','s-guide']
  .map(n => {
    if (n === '|') return '<div class="my-[6.5px] h-px shrink-0 bg-[#dcdad8]"></div>';
    const active = [0,6,8,9,12,13,18].includes(k++);
    return `<div class="${active ? 'mb-px flex h-[34px] shrink-0 items-center justify-center rounded-[5px] border border-[#cdc7c2] bg-[#d6d1cd]' : 'mb-px flex h-[34px] shrink-0 items-center justify-center'}">${icon16(n)}</div>`;
  }).join('');

$('paints').innerHTML = ['p-x','p-flat','p-lin','p-rad','p-mesh','p-pat','p-sw','p-q','p-eo','p-nz']
  .map(n => `<div class="${n === 'p-nz' ? 'flex h-[34px] w-[36px] items-center justify-center rounded-[5px] border border-[#cdc7c2] bg-[#e4e4e0]' : 'flex h-[34px] w-[36px] items-center justify-center'}">${icon16(n)}</div>`).join('');

const colors = '000 1a1a1a 333 4d4d4d 666 808080 999 b3b3b3 ccc e6e6e6 ececec f2f2f2 f9f9f9 fff 800000 f00 808000 ff0 008000 0f0 008080 0ff 000080 00f 800080 f0f 2b0000 550000 800000 aa0000 d40000 ff0000 ff2a2a ff5555 ff8080 ffaaaa ffd5d5 280b0b 501616 782121 a02c2c c83737 d35f5f de8787 e9afaf f4d7d7 241c1c 483737 6c5353 916f6f ac9393 c8b7b7 e3dbdb 2b1100 552200 803300 aa4400 d45500 ff6600 ff7f2a'.split(' ');
$('palette').innerHTML = '<svg class="h-[19px] w-[19px] shrink-0 bg-white" viewBox="0 0 19 19"><path d="M0 0l19 19M19 0L0 19" stroke="#780c0c" stroke-width="1.500"/></svg>'
  + colors.map(c => `<div class="h-[19px] w-[19px] shrink-0" style="background:#${c}"></div>`).join('');

// Canvas: page, object, grid, rulers
const S = 30.62, OX = 153, OY = 236;
let s = '<rect x="79" y="182" width="647" height="723" fill="#fff"/>';
s += '<ellipse cx="449.800" cy="376.600" rx="154" ry="60.400" fill="none" stroke="#000" stroke-width="8.500"/>';
for (let i = -2; i < 19; i++) { const x = Math.floor(OX + i * S) + .5; s += `<path d="M${x} 182V905" stroke="#00f" stroke-opacity=".26"/>`; }
for (let i = -1; i < 22; i++) { const y = Math.floor(OY + i * S) + .5; s += `<path d="M79 ${y}H726" stroke="#00f" stroke-opacity=".26"/>`; }
s += '<path d="M153.500 905V236.500H726" fill="none" stroke="#26264f" stroke-opacity=".85"/>';
s += '<path d="M449.500 376.500L537 618" stroke="#ff4a4a" stroke-opacity=".7" stroke-width="1.100"/>';
s += '<path d="M444.500 371.500l10 10M454.500 371.500l-10 10" stroke="#c80000" stroke-width=".9"/>';
s += '<rect x="534.500" y="616.500" width="6" height="6" fill="#fff" stroke="#7f7fff"/>';
s += '<rect x="382" y="348" width="136" height="17" fill="#33337f" fill-opacity=".5"/>';
s += '<text x="385.500" y="361.500" font-size="10.200" textLength="128.500" fill="#fff" font-family="DejaVu Sans">Handle to object midpoint</text>';
for (let i = -12; i < 94; i++) {
  const x = Math.floor(OX + i * S / 5) + .5;
  if (x < 79 || x > 726) continue;
  const top = i % 10 === 0 ? 156 : i % 5 === 0 ? 168 : 174;
  s += `<path d="M${x} ${top}V181" stroke="#2e3436"/>`;
  if (i % 10 === 0) s += `<text x="${x + 2}" y="166.200" font-size="9.600" fill="#55595b" font-family="Noto Sans">${i / 2}</text>`;
}
for (let i = -8; i < 110; i++) {
  const y = Math.floor(OY - .6 + i * S / 5) + .5;
  if (y < 183 || y > 904) continue;
  const left = i % 10 === 0 ? 61 : i % 5 === 0 ? 69 : 73;
  s += `<path d="M${left} ${y}H78" stroke="#2e3436"/>`;
  if (i % 10 === 0) String(i / 2).split('').forEach((c, j) => s += `<text x="69" y="${y + 9.500 + j * 8.700}" text-anchor="middle" font-size="9.500" fill="#55595b" font-family="Noto Sans">${c}</text>`);
}
s += '<path d="M79 181.500H726M78.500 181V905" stroke="#2e3436"/>';
s += '<path d="M440 177.500h9l-4.500 4.500zM73.500 363v8.500l5-4.200z" fill="#2e3436"/>';
$('canvas').innerHTML = s;

// Visible edge of the window behind
const L = $('leftStrip');
let h = '';
[[0,30,'#c9c8c6'],[66,26,'#a3a19e'],[296,24,'#b0aeab']].forEach(([t,b,c]) => h += `<div class="absolute left-0 w-full" style="top:${t}px;height:${b}px;background:${c}"></div>`);
[[36,1],[129,1],[160,1],[244,1],[296,1],[322,1],[412,1],[434,1],[514,1],[537,1],[706,1],[729,1],[769,1],[860,1],[885,1]].forEach(([t,b]) => h += `<div class="absolute left-0 w-full bg-[#6f6d6a]" style="top:${t}px;height:${b}px"></div>`);
[[329,23],[446,24],[480,24],[548,24],[583,23]].forEach(([t,b]) => h += `<div class="absolute left-0 w-full bg-[#3a72ad]" style="top:${t}px;height:${b}px"></div>`);
[[358,46],[614,46]].forEach(([t,b]) => h += `<div class="absolute -left-[10px] w-[14px] rounded-[3px] border border-[#777] bg-[#c4c3c1]" style="top:${t}px;height:${b}px"></div>`);
h += '<div class="absolute left-0 top-[819px] h-[26px] w-full border-y border-black bg-[#c98383]"></div>';
h += '<div class="absolute left-[4px] top-[171px] h-[14px] w-[14px] rounded-full bg-[#204a87]"></div>';
[['ol',253,-4],['ru',279,0],['e',303,-2],['ty',335,-2],['t',451,0],['ng',520,-4],['e',553,1],['rn',667,-2],['Op',686,-6],['e',711,-1],['p',750,0],['R',770,0],['O',791,-3],['en',873,-4],['op',896,-5],['mo',923,-8],['c',950,1],['cr',975,-2]].forEach(([t,y,x]) => {
  const light = [335,451,553].includes(y);
  h += `<span class="${light ? 'absolute text-[#b9cce0]' : 'absolute text-[#3b3e40]'}" style="top:${y}px;left:${x}px">${t}</span>`;
});
L.innerHTML = h;

$('rightRows').innerHTML = Array.from({length: 32}, (_, i) => {
  const sel = i === 26 || i > 27;
  return `<div class="${sel ? 'h-[25px] shrink-0 border-t border-[#9cc2f0] bg-[#3584e4]' : 'h-[25px] shrink-0 border-t border-[#e2e2e2] bg-[#fbfbfb]'}"></div>`;
}).join('');
</script>
</body>
</html>
